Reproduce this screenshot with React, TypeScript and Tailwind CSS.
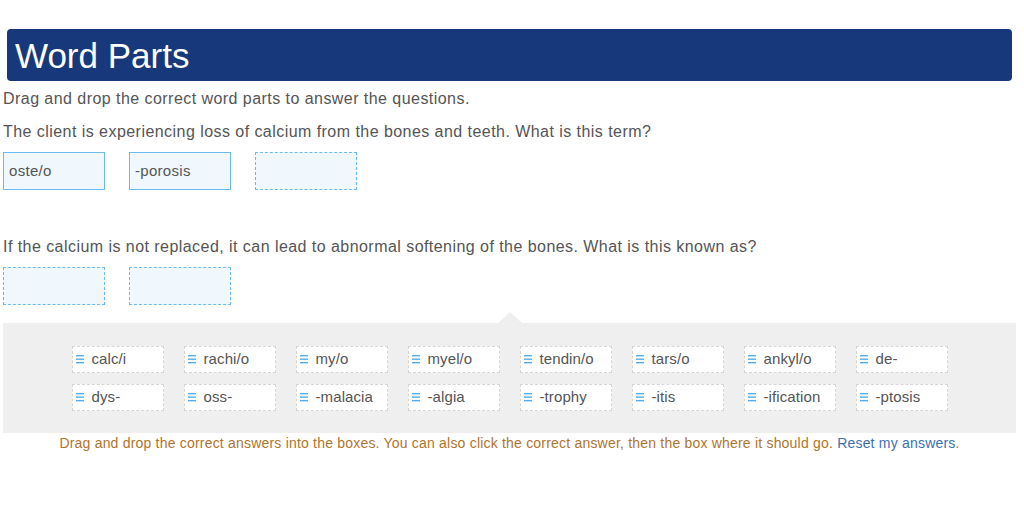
import React from "react";

const tiles = [
  ["calc/i", "rachi/o", "my/o", "myel/o", "tendin/o", "tars/o", "ankyl/o", "de-"],
  ["dys-", "oss-", "-malacia", "-algia", "-trophy", "-itis", "-ification", "-ptosis"],
];

function Grip() {
  return (
    <svg width="9" height="10" viewBox="0 0 9 10" className="shrink-0">
      <rect x="0" y="1" width="8" height="1.4" fill="#55aef0" />
      <rect x="0" y="4.5" width="8" height="1.4" fill="#55aef0" />
      <rect x="0" y="8" width="8" height="1.4" fill="#55aef0" />
    </svg>
  );
}

function Tile({ label }: { label: string }) {
  return (
    <div className="w-[92px] h-[27px] bg-white border border-dashed border-[#d6d6d6] flex items-center pl-[3px] gap-[7px] text-[15px] tracking-[0.1px] text-[#555]">
      <Grip />
      <span>{label}</span>
    </div>
  );
}

function Filled({ label }: { label: string }) {
  return (
    <div className="w-[102px] h-[38px] bg-[#f0f7fd] border border-[#6bbaf2] flex items-center pl-[5px] text-[15px] tracking-[0.3px] text-[#555]">
      {label}
    </div>
  );
}

function Empty() {
  return <div className="w-[102px] h-[38px] bg-[#f0f7fd] border border-dashed border-[#6bbaf2]" />;
}

export default function App() {
  return (
    <div className="w-[1024px] h-[513px] bg-white overflow-hidden" style={{ fontFamily: '"Liberation Sans", Arial, sans-serif' }}>
      <div className="pt-[29px] pl-[7px] pr-[12px]">
        <div className="h-[52px] bg-[#17397b] rounded-[4px] flex items-center pl-[8px]">
          <h1 className="text-white text-[35px] leading-none">Word Parts</h1>
        </div>
      </div>
      <div className="pl-[3px] pr-[8px]">
        <p className="mt-[7px] h-[20px] leading-[22px] text-[16px] tracking-[0.45px] text-[#555]">Drag and drop the correct word parts to answer the questions.</p>
        <p className="mt-[13px] h-[20px] leading-[22px] text-[16px] tracking-[0.45px] text-[#555]">The client is experiencing loss of calcium from the bones and teeth. What is this term?</p>
        <div className="mt-[11px] flex gap-[24px]">
          <Filled label="oste/o" />
          <Filled label="-porosis" />
          <Empty />
        </div>
        <p className="mt-[46px] h-[20px] leading-[22px] text-[16px] tracking-[0.45px] text-[#555]">If the calcium is not replaced, it can lead to abnormal softening of the bones. What is this known as?</p>
        <div className="mt-[11px] flex gap-[24px]">
          <Empty />
          <Empty />
        </div>
        <div className="mt-[18px] relative bg-[#efefef] h-[110px] flex flex-col items-center justify-center gap-[11px]">
          <div className="absolute left-1/2 -translate-x-1/2 -top-[11px] w-0 h-0 border-l-[12px] border-r-[12px] border-b-[11px] border-l-transparent border-r-transparent border-b-[#efefef]" />
          {tiles.map((row, i) => (
            <div key={i} className="flex gap-[20px]">
              {row.map((t) => (
                <Tile key={t} label={t} />
              ))}
            </div>
          ))}
        </div>
        <p className="mt-[1px] text-center text-[14px] tracking-[0.2px] leading-[18px] text-[#b0742c]">
          Drag and drop the correct answers into the boxes. You can also click the correct answer, then the box where it should go.{" "}
          <span className="text-[#3b70b3]">Reset my answers</span>.
        </p>
      </div>
    </div>
  );
}
